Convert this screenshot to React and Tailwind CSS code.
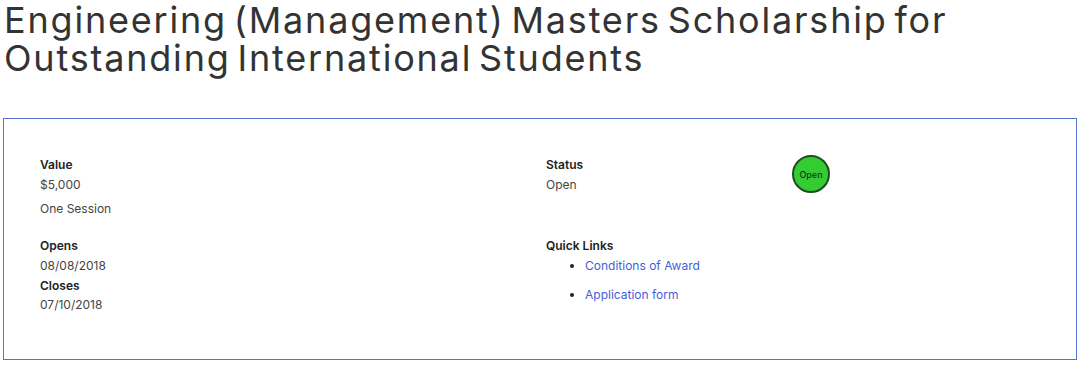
export default function App() {
  return (
    <div className="min-h-screen bg-white font-['Inter',sans-serif] text-[#333]">
      <h1 className="pl-[4px] pt-[1px] text-[36px] leading-[38px] tracking-[1.8px] [word-spacing:-5px] font-normal text-[#333]">
        Engineering (Management) Masters Scholarship for
        <br />
        Outstanding International Students
      </h1>

      {/* Details box */}
      <div className="mx-[3px] mt-[41px] h-[242px] border border-[#5574d4] pl-[36px] pt-[36px]">
        <div className="flex text-[12px] leading-[20px]">
          <div className="w-[506px]">
            <div className="font-semibold text-[#222]">Value</div>
            <div className="text-[#444]">$5,000</div>
            <div className="mt-[4px] text-[#444]">One Session</div>

            <div className="mt-[17px] font-semibold text-[#222]">Opens</div>
            <div className="text-[#444]">08/08/2018</div>
            <div className="leading-[19px] font-semibold text-[#222]">Closes</div>
            <div className="text-[#444]">07/10/2018</div>
          </div>

          <div className="w-[400px]">
            <div className="flex">
              <div className="w-[246px]">
                <div className="font-semibold text-[#222]">Status</div>
                <div className="text-[#444]">Open</div>
              </div>
              <div className="flex h-[38px] w-[38px] items-center justify-center rounded-full border-2 border-[#1e4d1e] bg-[#33cc33] text-[9px] font-medium leading-none text-[#1a3a1a]">
                Open
              </div>
            </div>

            <div className="mt-[41px] font-semibold text-[#222]">Quick Links</div>
            <ul className="list-disc pl-[39px] text-[#222]">
              <li>
                <a href="#" className="text-[#3f5fdc]">Conditions of Award</a>
              </li>
              <li className="mt-[9px]">
                <a href="#" className="text-[#3f5fdc]">Application form</a>
              </li>
            </ul>
          </div>
        </div>
      </div>
    </div>
  );
}
